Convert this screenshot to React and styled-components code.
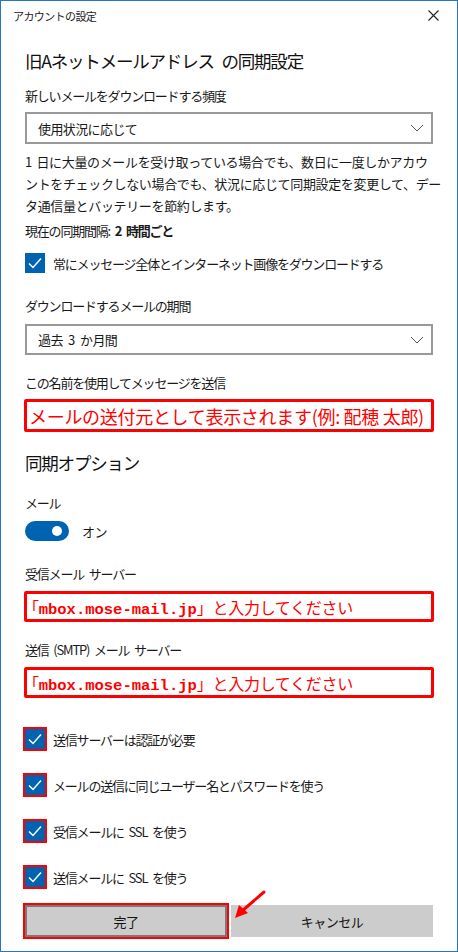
import React from "react";
import styled, { createGlobalStyle } from "styled-components";

const Global = createGlobalStyle`
  html, body { margin: 0; padding: 0; background: #fff; }
  body { font-family: "Noto Sans CJK JP", "Noto Sans", sans-serif; color: #1a1a1a; }
  * { box-sizing: border-box; }
`;

const Window = styled.div`
  width: 458px;
  height: 952px;
  border: 1px solid #2477c6;
  background: #fff;
  display: flex;
  flex-direction: column;
  overflow: hidden;
`;

const TitleBar = styled.div`
  height: 29px;
  display: flex;
  align-items: center;
  justify-content: space-between;
  padding: 0 18px 0 12px;
  font-size: 11px;
  letter-spacing: -0.6px;
  color: #222;
`;

const Content = styled.div`
  padding: 0 24px;
  display: flex;
  flex-direction: column;
`;

const Heading = styled.h1`
  margin: ${(p) => p.$mt}px 0 0;
  font-size: 17.5px;
  font-weight: 400;
  line-height: 26px;
  letter-spacing: -1.2px;
  word-spacing: 5px;
  color: #111;
  white-space: nowrap;
`;

const Label = styled.div`
  margin-top: ${(p) => p.$mt}px;
  font-size: 13px;
  line-height: 20px;
  letter-spacing: -1.2px;
  word-spacing: 3px;
  white-space: nowrap;
  color: #1a1a1a;
  b { font-weight: 700; }
`;

const Para = styled.p`
  margin: ${(p) => p.$mt}px 0 0;
  font-size: 13px;
  line-height: 22px;
  letter-spacing: -0.35px;
  word-spacing: 2px;
  white-space: nowrap;
`;

const Select = styled.div`
  margin-top: ${(p) => p.$mt}px;
  height: ${(p) => p.$h}px;
  border: 2px solid #999;
  display: flex;
  align-items: center;
  justify-content: space-between;
  padding: 0 7px 0 11px;
  font-size: 13px;
  letter-spacing: -0.6px;
  word-spacing: 3px;
  color: #1a1a1a;
`;

const CheckRow = styled.div`
  margin-top: ${(p) => p.$mt}px;
  height: ${(p) => (p.$red ? 24 : 20)}px;
  display: flex;
  align-items: center;
  gap: 8px;
  font-size: 13px;
  letter-spacing: -1.2px;
  word-spacing: 3px;
  white-space: nowrap;
`;

const Box = styled.span`
  width: 20px;
  height: 20px;
  flex: none;
  background: #0063b1;
  display: flex;
  align-items: center;
  justify-content: center;
  ${(p) => (p.$red ? "outline: 2.5px solid #ff0000; outline-offset: 0;" : "")}
`;

const RedBox = styled.div`
  margin: ${(p) => p.$mt}px -1px 0;
  height: ${(p) => p.$h}px;
  border: 3px solid #ff0000;
  border-radius: 2px;
  display: flex;
  align-items: center;
  padding-left: 2px;
  color: #ff0000;
  font-size: 18px;
  letter-spacing: -0.3px;
  white-space: nowrap;
`;

const ServerText = styled.span`
  font-size: 16px;
  letter-spacing: -0.3px;
`;

const Mono = styled.span`
  font-family: "Liberation Mono", "DejaVu Sans Mono", monospace;
  font-weight: 700;
  font-size: 15.5px;
  letter-spacing: 0;
`;

const OpenBracket = styled.span`
  margin-left: -6px;
`;

const ToggleRow = styled.div`
  margin-top: 8px;
  height: 20px;
  display: flex;
  align-items: center;
  gap: 13px;
  font-size: 13px;
  letter-spacing: -0.6px;
`;

const Toggle = styled.span`
  width: 44px;
  height: 20px;
  border-radius: 10px;
  background: #0063b1;
  display: flex;
  align-items: center;
  justify-content: flex-end;
  padding-right: 7px;
  &::after {
    content: "";
    width: 10px;
    height: 10px;
    border-radius: 50%;
    background: #fff;
  }
`;

const ButtonRow = styled.div`
  position: relative;
  margin-top: 16px;
  display: grid;
  grid-template-columns: 1fr 1fr;
  gap: 4px;
`;

const Button = styled.div`
  height: 32px;
  background: #cccccc;
  display: flex;
  align-items: center;
  justify-content: center;
  font-size: 13px;
  letter-spacing: -0.5px;
  color: #111;
  ${(p) =>
    p.$focus
      ? "border: 2px solid #7a7a7a; outline: 2px solid #ff0000; outline-offset: 0;"
      : ""}
`;

const Arrow = styled.svg`
  position: absolute;
  left: 205px;
  top: -14px;
  overflow: visible;
`;

const Chevron = () => (
  <svg width="14" height="8" viewBox="0 0 14 8">
    <path d="M1 1 L7 7 L13 1" fill="none" stroke="#555" strokeWidth="1" />
  </svg>
);

const Check = () => (
  <svg width="14" height="12" viewBox="0 0 14 12">
    <path d="M1 6.5 L5 10.5 L13 1.5" fill="none" stroke="#fff" strokeWidth="1.5" />
  </svg>
);

const ServerBox = ({ mt }) => (
  <RedBox $mt={mt} $h={31}>
    <ServerText>
      <OpenBracket>「</OpenBracket>
      <Mono>mbox.mose-mail.jp</Mono>」と入力してください
    </ServerText>
  </RedBox>
);

export default function App() {
  return (
    <>
      <Global />
      <Window>
        <TitleBar>
          <span>アカウントの設定</span>
          <svg width="11" height="11" viewBox="0 0 11 11">
            <path d="M0.5 0.5 L10.5 10.5 M10.5 0.5 L0.5 10.5" stroke="#222" strokeWidth="1.1" />
          </svg>
        </TitleBar>
        <Content>
          <Heading $mt={18}>旧Aネットメールアドレス の同期設定</Heading>
          <Label $mt={12}>新しいメールをダウンロードする頻度</Label>
          <Select $mt={6} $h={32}>
            <span>使用状況に応じて</span>
            <Chevron />
          </Select>
          <Para $mt={7}>
            1 日に大量のメールを受け取っている場合でも、数日に一度しかアカウ
            <br />
            ントをチェックしない場合でも、状況に応じて同期設定を変更して、デー
            <br />
            タ通信量とバッテリーを節約します。
          </Para>
          <Label $mt={4}>
            現在の同期間隔: <b>2 時間ごと</b>
          </Label>
          <CheckRow $mt={12}>
            <Box>
              <Check />
            </Box>
            常にメッセージ全体とインターネット画像をダウンロードする
          </CheckRow>
          <Label $mt={23}>ダウンロードするメールの期間</Label>
          <Select $mt={8} $h={31}>
            <span>過去 3 か月間</span>
            <Chevron />
          </Select>
          <Label $mt={18}>この名前を使用してメッセージを送信</Label>
          <RedBox $mt={6} $h={33}>メールの送付元として表示されます(例: 配穂 太郎)</RedBox>
          <Heading $mt={18}>同期オプション</Heading>
          <Label $mt={17}>メール</Label>
          <ToggleRow>
            <Toggle />
            オン
          </ToggleRow>
          <Label $mt={23}>受信メール サーバー</Label>
          <ServerBox mt={7} />
          <Label $mt={18}>送信 (SMTP) メール サーバー</Label>
          <ServerBox mt={7} />
          <CheckRow $mt={29} $red>
            <Box $red>
              <Check />
            </Box>
            送信サーバーは認証が必要
          </CheckRow>
          <CheckRow $mt={22} $red>
            <Box $red>
              <Check />
            </Box>
            メールの送信に同じユーザー名とパスワードを使う
          </CheckRow>
          <CheckRow $mt={22} $red>
            <Box $red>
              <Check />
            </Box>
            受信メールに SSL を使う
          </CheckRow>
          <CheckRow $mt={22} $red>
            <Box $red>
              <Check />
            </Box>
            送信メールに SSL を使う
          </CheckRow>
          <ButtonRow>
            <Button $focus>完了</Button>
            <Button>キャンセル</Button>
            <Arrow width="40" height="36" viewBox="0 0 40 36">
              <path d="M34 1 L12 20" stroke="#ff0000" strokeWidth="3" strokeLinecap="round" />
              <path d="M5 27 L9 14 L18 22 Z" fill="#ff0000" />
            </Arrow>
          </ButtonRow>
        </Content>
      </Window>
    </>
  );
}
